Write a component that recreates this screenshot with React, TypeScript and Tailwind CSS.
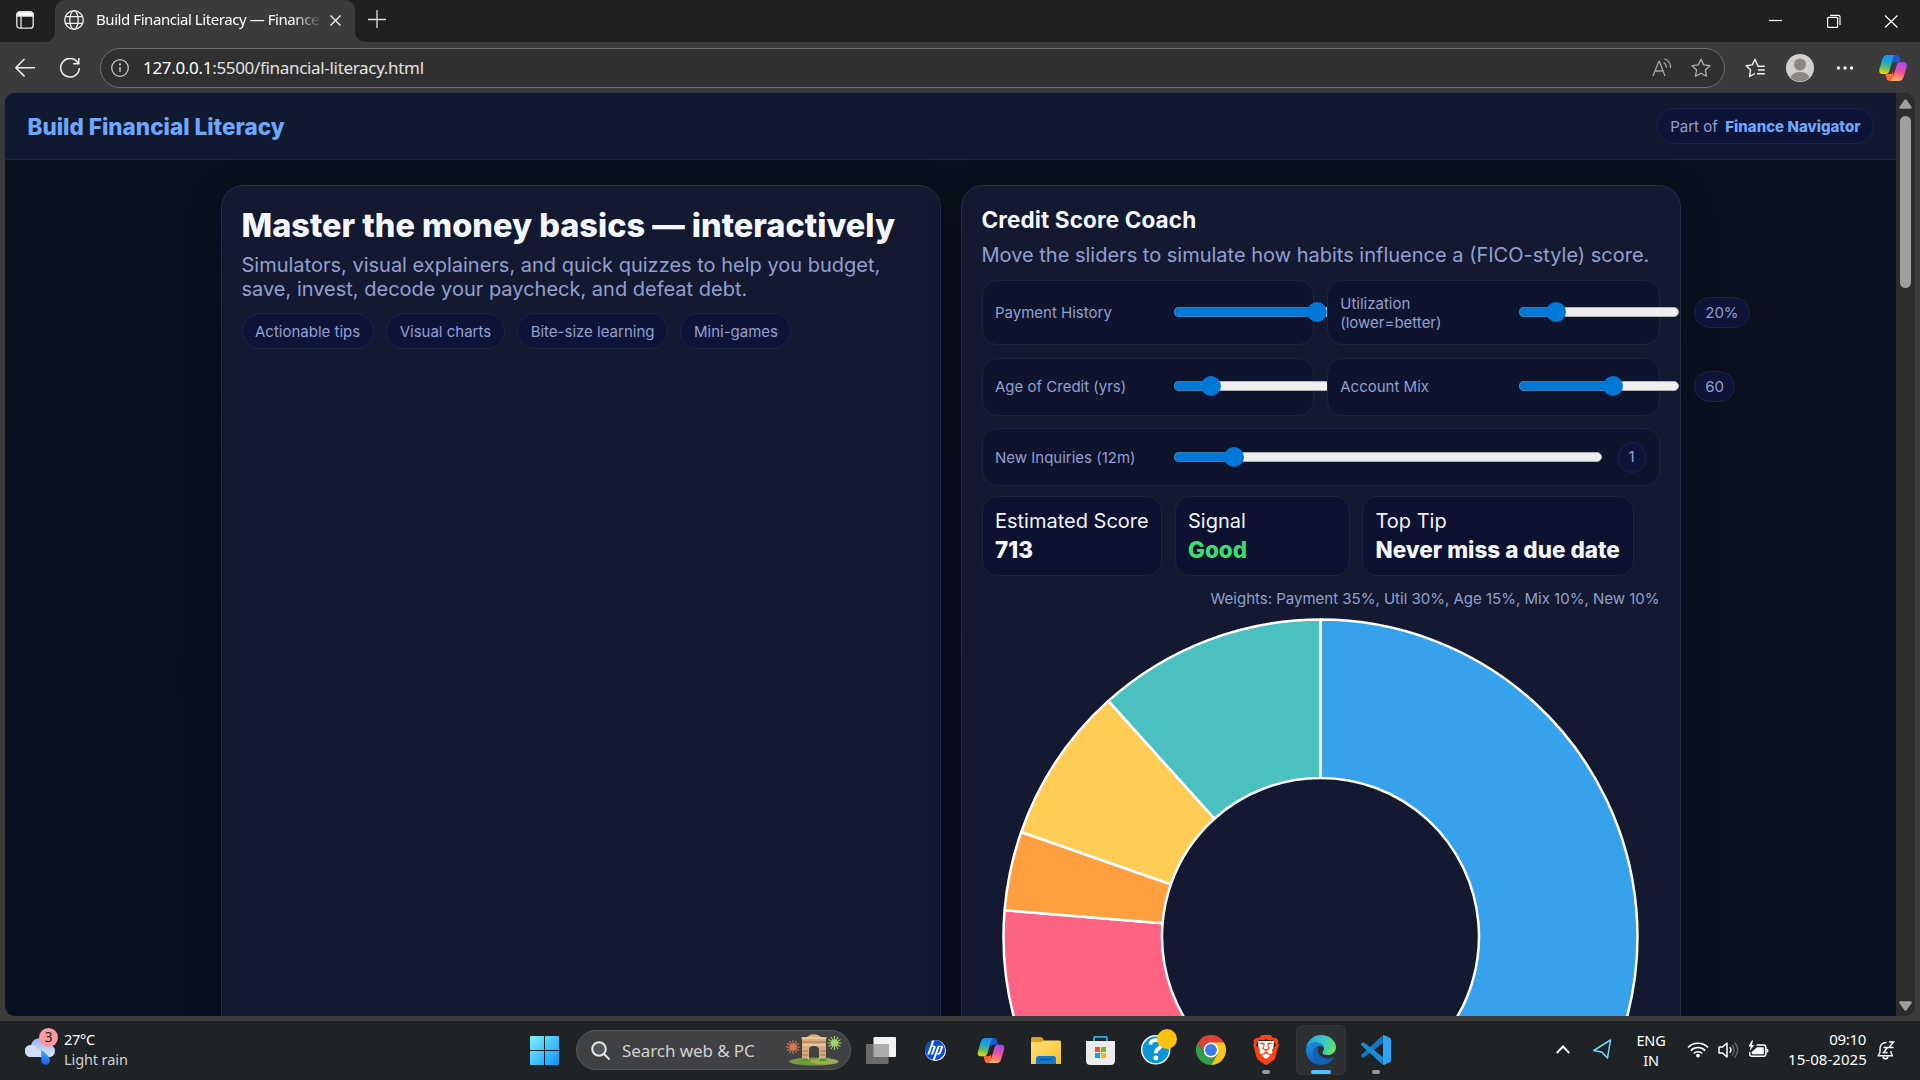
import React from "react";
import { SiBrave, SiHp } from "react-icons/si";

const UI = "font-['Noto_Sans',sans-serif]";

function Copilot({ id, className }: { id: string; className?: string }) {
  return (
    <svg className={className} viewBox="0 0 28 26" fill="none">
      <defs>
        <linearGradient id={id + "a"} x1="8" y1="0" x2="5" y2="19" gradientUnits="userSpaceOnUse">
          <stop stopColor="#1d8ff0" />
          <stop offset="0.35" stopColor="#1aa5d8" />
          <stop offset="0.65" stopColor="#5dbb6a" />
          <stop offset="1" stopColor="#f6d400" />
        </linearGradient>
        <linearGradient id={id + "b"} x1="22" y1="7" x2="17" y2="26" gradientUnits="userSpaceOnUse">
          <stop stopColor="#a24df0" />
          <stop offset="0.5" stopColor="#ef4f9a" />
          <stop offset="1" stopColor="#ffb35c" />
        </linearGradient>
      </defs>
      <path d="M13 0h4.500c1.500 0 2.300 1 2.700 2.300L21.500 7H17c-1.800 0-2.600 1-3.100 2.600z" fill="#1f56d8" />
      <path d="M15 26h-4.500c-1.600 0-2.500-1-2.900-2.400L6.200 19H11c1.800 0 2.500-1 3-2.600z" fill="#ff6a3c" />
      <path d="M8.500 0H17c-1.500 0-2.300 1.300-2.800 2.800L10.500 15.500C9.700 18 8.800 19 6.500 19H3.500C.6 19-.3 16.800.4 14L3.600 3.500C4.300 1.200 5.800 0 8.500 0z" fill={`url(#${id}a)`} />
      <path d="M19.500 26H11c1.500 0 2.300-1.300 2.800-2.800l3.700-12.700C18.300 8 19.200 7 21.500 7h3c2.900 0 3.800 2.200 3.100 5l-3.200 10.500C23.700 24.800 22.200 26 19.500 26z" fill={`url(#${id}b)`} />
    </svg>
  );
}

function TabStrip() {
  return (
    <div className="flex h-[42px] shrink-0 bg-[#3b3b3b]">
      <div className="flex h-full w-[55px] items-center rounded-br-[10px] bg-[#202020] pl-4">
        <svg className="mb-[2px] size-[18px]" viewBox="0 0 18 18" fill="none" stroke="#e8e8e8" strokeWidth="1.3">
          <rect x="0.8" y="0.8" width="16.400" height="16.400" rx="3" />
          <path d="M1 3.500A2.500 2.500 0 0 1 3.500 1h11A2.500 2.500 0 0 1 17 3.500V5H1z" fill="#fff" />
          <path d="M5 5v12" />
        </svg>
      </div>
      <div className="h-full w-[300px] bg-[#202020]">
        <div className="flex h-full items-start rounded-t-[10px] bg-[#3b3b3b] pl-[9px]">
          <svg className="mt-[10px] size-5 shrink-0" viewBox="0 0 20 20" fill="none" stroke="#f0f0f0" strokeWidth="1.3">
            <circle cx="10" cy="10" r="9.300" />
            <ellipse cx="10" cy="10" rx="4.200" ry="9.300" />
            <path d="M1.500 6.700h17M1.500 13.300h17" />
          </svg>
          <div className={`${UI} ml-3 mt-[7px] w-[224px] overflow-hidden whitespace-nowrap text-[15px] leading-6 tracking-[-0.43px] text-white [mask-image:linear-gradient(90deg,#000_198px,transparent_226px)]`}>
            Build Financial Literacy — Finance
          </div>
          <svg className="ml-[10px] mt-[15px] size-[11px] shrink-0" viewBox="0 0 11 11" stroke="#f2f2f2" strokeWidth="1.4">
            <path d="M.5.5l10 10M10.500.5l-10 10" />
          </svg>
        </div>
      </div>
      <div className="flex h-full flex-1 items-start rounded-bl-[10px] bg-[#202020]">
        <svg className="ml-[13px] mt-[10px] size-[18px]" viewBox="0 0 18 18" stroke="#e0e0e0" strokeWidth="1.3">
          <path d="M9 0v18M0 9.500h18" />
        </svg>
        <div className="flex-1" />
        <svg className="mr-[21px] mt-[14px] h-[14px] w-[131px]" viewBox="0 0 131 14" fill="none" stroke="#fff" strokeWidth="1.200">
          <path d="M1 6.500h13" />
          <rect x="59.600" y="3.400" width="10" height="10" rx="1" />
          <path d="M62 1.300h8.500a1.500 1.500 0 0 1 1.500 1.500V11" />
          <path d="M117 1.500l12.500 12M129.500 1.500l-12.500 12" />
        </svg>
      </div>
    </div>
  );
}

const STAR = "M10 1.200l2.700 5.700 6.200.8-4.500 4.300 1.100 6.200L10 15.200l-5.500 3 1.100-6.200L1.100 7.700l6.200-.8z";

function Toolbar() {
  return (
    <div className="flex h-[51px] shrink-0 items-start bg-[#3b3b3b] pt-[6px]">
      <svg className="ml-[15px] mt-[10px] size-5" viewBox="0 0 20 20" fill="none" stroke="#f0f0f0" strokeWidth="1.5">
        <path d="M20 9.700H1M9.500 1L.8 9.700l8.700 8.700" />
      </svg>
      <svg className="ml-[25px] mt-[10px] size-5" viewBox="0 0 20 20" fill="none" stroke="#f0f0f0" strokeWidth="1.5">
        <path d="M18.300 5.500A9.300 9.300 0 1 0 19.300 10M18.800 0v5.700h-5.700" />
      </svg>
      <div className="ml-5 flex h-10 w-[1625px] items-center rounded-full border border-[#6e6e6e] bg-[#303030] pl-[10px]">
        <svg className="size-[18px]" viewBox="0 0 18 18" fill="none" stroke="#c8c8c8" strokeWidth="1.3">
          <circle cx="9" cy="9" r="8.300" />
          <path d="M9 8v5" />
          <circle cx="9" cy="5.400" r=".5" fill="#c8c8c8" />
        </svg>
        <div className={`${UI} ml-[14px] flex-1 text-[17px] leading-6 tracking-[-0.32px] text-[#e2e2e2]`}>
          <span className="text-white">127.0.0.1</span>:5500/financial-literacy.html
        </div>
        <svg className="size-5" viewBox="0 0 20 20" fill="none" stroke="#a5a5a5" strokeWidth="1.300">
          <path d="M1 18L6.800 3.500h.6L13 18M3 13h8" />
          <path d="M11.500 4.500a6 6 0 0 1 3 5M12.500.8a9 9 0 0 1 6 9.200" />
        </svg>
        <svg className="ml-[19px] mr-[13px] size-5" viewBox="0 0 20 20" fill="none" stroke="#b0b0b0" strokeWidth="1.300" strokeLinejoin="round">
          <path d={STAR} />
        </svg>
      </div>
      <svg className="ml-5 mt-[10px] size-5" viewBox="0 0 20 20" fill="none" stroke="#f2f2f2" strokeWidth="1.400" strokeLinejoin="round">
        <path d="M19.800 8.200H13L10 1.200 7.300 6.900l-6.200.8L5.600 12l-1.100 6.500 5.500-3M13 12h6.800M12 15.800h7.800" />
      </svg>
      <svg className="ml-[21px] mt-[6px] size-7" viewBox="0 0 28 28">
        <circle cx="14" cy="14" r="14" fill="#d2d0ce" />
        <circle cx="14" cy="10.500" r="6" fill="#8a8684" />
        <path d="M4.500 23.500C6 19.500 10 18 14 18s8 1.500 9.500 5.500A14 14 0 0 1 4.500 23.500z" fill="#8a8684" />
      </svg>
      <svg className="ml-[22px] mt-[18px] h-1 w-[18px]" viewBox="0 0 18 4" fill="#f2f2f2">
        <circle cx="2.500" cy="2" r="1.700" />
        <circle cx="9" cy="2" r="1.700" />
        <circle cx="15.500" cy="2" r="1.700" />
      </svg>
      <Copilot id="tb" className="ml-[25px] mt-[7px] h-[26px] w-7" />
    </div>
  );
}

function Pill({ children, small }: { children: React.ReactNode; small?: boolean }) {
  return (
    <span
      className={
        "flex shrink-0 items-center whitespace-nowrap rounded-full border border-[#1c2547] bg-[#0c1437] text-[15px] text-[#93a0cf] " +
        (small ? "h-[31px] px-[10px] pt-px" : "h-9 px-[12.5px] pt-[2px]")
      }
    >
      {children}
    </span>
  );
}

function Slider({ pos, grow }: { pos: number; grow?: boolean }) {
  return (
    <div
      className={
        "relative -top-px h-[10px] shrink-0 rounded-full border border-[#b2b2b2] bg-[#efefef] " +
        (grow ? "top-0 w-[428px]" : "w-[159.5px]")
      }
    >
      <div className="-ml-px -mt-px h-[10px] rounded-l-full border border-r-0 border-[#2f7fb9] bg-[#0078d7]" style={{ width: pos }} />
      <div className="absolute -top-[6px] size-5 -translate-x-1/2 rounded-full bg-[#0078d7]" style={{ left: pos - 1 }} />
    </div>
  );
}

function Control({ label, pos, value, wide, tall }: { label: React.ReactNode; pos: number; value?: string; wide?: boolean; tall?: boolean }) {
  return (
    <div
      className={
        "relative flex min-w-0 items-center rounded-[15px] border border-[#1d2442] bg-[#0e132e] pl-[12.5px] " +
        (wide ? "col-span-2 h-[58px]" : tall ? "h-[65px]" : "h-[58px]")
      }
    >
      <div className="w-[163px] shrink-0 text-[15px] leading-[19px] text-[#93a0cf]">{label}</div>
      <div className="ml-4 flex shrink-0 items-center gap-[15.5px]">
        <Slider pos={pos} grow={wide} />
        {value && <Pill small>{value}</Pill>}
      </div>
    </div>
  );
}

function Stat({ label, value, className }: { label: string; value: string; className: string }) {
  return (
    <div className={"h-20 whitespace-nowrap rounded-[15px] border border-[#1d2442] bg-[#0c1230] pl-[12.5px] pt-3 " + className}>
      <div className="text-[20px] leading-6 text-[#f1f4ff]">{label}</div>
      <div className={"mt-[3px] text-[22.5px] font-extrabold leading-[27px] " + (value === "Good" ? "text-[#3ddc6f]" : "text-[#f5f7ff]")}>{value}</div>
    </div>
  );
}

const SLICES = [
  { from: 0, to: 170, color: "#36a2eb" },
  { from: 170, to: 274.75, color: "#ff6384" },
  { from: 274.75, to: 289.25, color: "#ff9f40" },
  { from: 289.25, to: 318, color: "#ffcd56" },
  { from: 318, to: 360, color: "#4bc0c0" },
];

function slicePath(from: number, to: number) {
  const R = 317;
  const r = 158.5;
  const p = (rad: number, deg: number) => {
    const t = (deg * Math.PI) / 180;
    return `${(318.5 + rad * Math.sin(t)).toFixed(2)} ${(318.5 - rad * Math.cos(t)).toFixed(2)}`;
  };
  return `M${p(R, from)}A${R} ${R} 0 0 1 ${p(R, to)}L${p(r, to)}A${r} ${r} 0 0 0 ${p(r, from)}Z`;
}

function Page() {
  return (
    <div className="flex min-h-0 flex-1 bg-[#3b3b3b] pb-1 pl-[5px] pr-[5px]">
      <div className="flex min-w-0 flex-1 overflow-hidden rounded-[10px] bg-[#2c2c2c] font-['Inter',sans-serif]">
        <div className="flex min-w-0 flex-1 flex-col bg-[linear-gradient(180deg,#0a101d,#0a0f22)]">
          <header className="flex h-[67px] shrink-0 items-center justify-between border-b border-[#1d2742] bg-[#111930] pl-[22.5px] pr-[22px]">
            <div className="pt-[2px] text-[22.5px] font-extrabold leading-7 text-[#6ea8fe]">Build Financial Literacy</div>
            <Pill>
              Part of <b className="ml-[7.5px] font-extrabold text-[#6ea8fe]">Finance Navigator</b>
            </Pill>
          </header>
          <main className="flex min-h-0 flex-1 gap-5 pl-[215.5px] pt-[25px]">
            <section className="h-[1100px] w-[720px] shrink-0 rounded-[22px] border border-[#262e49] bg-[#121931] px-5 pt-5 shadow-[0_10px_38px_rgba(0,0,0,0.25)]">
              <h1 className="whitespace-nowrap text-[32.5px] font-extrabold leading-[39px] text-[#f5f7ff]">Master the money basics — interactively</h1>
              <p className="mt-2 text-[20px] leading-6 text-[#93a0cf]">
                Simulators, visual explainers, and quick quizzes to help you budget,
                <br />
                save, invest, decode your paycheck, and defeat debt.
              </p>
              <div className="mt-3 flex gap-[12.5px]">
                <Pill>Actionable tips</Pill>
                <Pill>Visual charts</Pill>
                <Pill>Bite-size learning</Pill>
                <Pill>Mini-games</Pill>
              </div>
            </section>
            <section className="h-[1100px] w-[720px] shrink-0 rounded-[22px] border border-[#262e49] bg-[#121931] px-5 pt-5 shadow-[0_10px_38px_rgba(0,0,0,0.25)]">
              <h3 className="text-[22.5px] font-bold leading-[27px] tracking-[0.12px] text-[#f5f7ff]">Credit Score Coach</h3>
              <p className="mt-[10px] whitespace-nowrap text-[20px] leading-6 text-[#93a0cf]">Move the sliders to simulate how habits influence a (FICO-style) score.</p>
              <div className="mt-[13px] grid grid-cols-2 gap-[12.5px]">
                <Control label="Payment History" pos={143} tall />
                <Control label={<>Utilization<br />(lower=better)</>} pos={37} value="20%" tall />
                <Control label="Age of Credit (yrs)" pos={37} />
                <Control label="Account Mix" pos={94} value="60" />
                <Control label="New Inquiries (12m)" pos={60} value="1" wide />
              </div>
              <div className="mt-[10px] flex gap-[12.5px]">
                <Stat label="Estimated Score" value="713" className="w-[180.5px]" />
                <Stat label="Signal" value="Good" className="w-[175px]" />
                <Stat label="Top Tip" value="Never miss a due date" className="w-[271.5px]" />
              </div>
              <div className="mt-[13px] text-right text-[15px] leading-5 text-[#93a0cf]">Weights: Payment 35%, Util 30%, Age 15%, Mix 10%, New 10%</div>
              <svg className="ml-[20px] mt-[9px] size-[637px]" viewBox="0 0 637 637" stroke="#fff" strokeWidth="2.500" strokeLinejoin="bevel">
                {SLICES.map((s) => (
                  <path key={s.color} d={slicePath(s.from, s.to)} fill={s.color} />
                ))}
              </svg>
            </section>
          </main>
        </div>
        <div className="flex w-[19px] shrink-0 flex-col items-center justify-between bg-[#2c2c2c] py-[6px]">
          <div className="flex flex-col items-center gap-[7px]">
            <svg className="h-[10px] w-[13px]" viewBox="0 0 13 10" fill="#9f9f9f"><path d="M5.500.8q1-1.100 2 0l5 7q.6 2-1 2h-10q-1.600 0-1-2z" /></svg>
            <div className="h-[172px] w-[11px] rounded-full bg-[#9f9f9f]" />
          </div>
          <svg className="mb-[-1px] h-[10px] w-[13px]" viewBox="0 0 13 10" fill="#9f9f9f"><path d="M5.500 9.200q1 1.100 2 0l5-7q.6-2-1-2h-10q-1.600 0-1 2z" /></svg>
        </div>
      </div>
    </div>
  );
}

function Slot({ children, active, running }: { children: React.ReactNode; active?: boolean; running?: boolean }) {
  return (
    <div className={"relative flex size-[50px] items-center justify-center rounded-md border " + (active ? "border-[#33373a] bg-[#2d3033]" : "border-transparent")}>
      {children}
      {active && <div className="absolute bottom-0 h-1 w-5 rounded-full bg-[#4cc2ff]" />}
      {running && <div className="absolute bottom-0 h-1 w-2 rounded-full bg-[#9a9a9a]" />}
    </div>
  );
}

function Burst({ color, x, y }: { color: string; x: number; y: number }) {
  return (
    <g stroke={color} strokeWidth="1.100">
      {[0, 30, 60, 90, 120, 150].map((a) => (
        <path key={a} d={`M${x - 7} ${y}h14`} transform={`rotate(${a} ${x} ${y})`} />
      ))}
      <circle cx={x} cy={y} r="3.500" fill={color} stroke="none" />
    </g>
  );
}

function SearchBox() {
  return (
    <div className="flex h-10 w-[275px] items-center rounded-full border border-[#56585a] bg-[#3f4143] pl-[14px]">
      <svg className="size-[19px]" viewBox="0 0 19 19" fill="none" stroke="#e8e8e8" strokeWidth="2" strokeLinecap="round">
        <circle cx="8" cy="8" r="6.800" fill="#55585a" />
        <path d="M13 13l5 5" />
      </svg>
      <div className={`${UI} ml-[12px] w-[164px] whitespace-nowrap pt-px text-[17px] leading-6 tracking-[-0.08px] text-[#d2d2d2]`}>Search web &amp; PC</div>
      <svg className="h-8 w-14" viewBox="0 0 56 32">
        <ellipse cx="28" cy="27.500" rx="25" ry="4" fill="#6f9a3f" />
        <ellipse cx="38" cy="27.500" rx="14" ry="3" fill="#a3a84d" />
        <path d="M16 26V4q6-1 7-2.500Q28-1 33 1.500 34 3 40 4v22h-7V16q0-4-5-4t-5 4v10z" fill="#d9ab80" />
        <path d="M15.500 4h25M16 11h24" stroke="#f0cfa8" strokeWidth="1.500" />
        <path d="M16 8h24M16 17h6M16 21h6M34 17h6M34 21h6" stroke="#a87550" strokeWidth="1" />
        <path d="M15 27q1-4 3.500-2 3-2 4.500 2zM33 27q1-4 3.500-2 3-2 4.500 2z" fill="#3f9a3a" />
        <Burst color="#d3784f" x={7} y={13} />
        <Burst color="#a5cf6f" x={48.5} y={9} />
      </svg>
    </div>
  );
}

function Taskbar() {
  return (
    <div className={`${UI} grid h-[60px] shrink-0 grid-cols-[530px_1fr_400px] border-t border-[#414141] bg-[#202326] text-white`}>
      <div className="flex pl-[22px] pt-[6px]">
        <svg className="h-[40px] w-[36px]" viewBox="0 0 36 40">
          <defs>
            <linearGradient id="cl" x1="0" y1="0" x2="0" y2="1"><stop stopColor="#8fb5f2" /><stop offset="1" stopColor="#dbe8fc" /></linearGradient>
            <linearGradient id="dr" x1="0" y1="0" x2="0" y2="1"><stop stopColor="#5bb2ff" /><stop offset="1" stopColor="#0a62f0" /></linearGradient>
          </defs>
          <path d="M9 30q-6-.5-6-6t6-6q2-7 9.500-7T28 18q5 1 5 6t-5 6z" fill="url(#cl)" />
          <path d="M9 30q-6-.5-6-6t6-6q5 0 6.500 4.500Q24 22 26 30z" fill="#cfdff9" />
          <path d="M19 22.500q9 6.500 9 11a4.300 4.300 0 0 1-8.600 0z" fill="url(#dr)" />
          <circle cx="26.500" cy="10.500" r="9.500" fill="#ff99a4" />
          <text x="26.500" y="15.300" fontSize="13.500" textAnchor="middle" fill="#1b1b1b">3</text>
        </svg>
        <div className="ml-[6px] mt-[2px] text-[14.5px] leading-5 tracking-[-0.3px]">
          <div>27°C</div>
          <div className="tracking-[-0.1px] text-[#cfcfcf]">Light rain</div>
        </div>
      </div>
      <div className="flex items-center pb-px">
        <svg className="size-[29px]" viewBox="0 0 29 29">
          <defs><linearGradient id="wn" x1="0" y1="0" x2="1" y2="1" gradientUnits="objectBoundingBox"><stop stopColor="#7df1ff" /><stop offset="0.5" stopColor="#46c4fb" /><stop offset="1" stopColor="#0c92f5" /></linearGradient></defs>
          <path d="M0 1q0-1 1-1h13v14H0zM15 0h13q1 0 1 1v13H15zM0 15h14v14H1q-1 0-1-1zM15 15h14v13q0 1-1 1H15z" fill="url(#wn)" />
        </svg>
        <div className="ml-[17px]"><SearchBox /></div>
        <div className="ml-[5px] flex gap-[5px]">
          <Slot>
            <svg className="h-[27px] w-[30px]" viewBox="0 0 30 27">
              <rect x="7.500" width="22.500" height="20" rx="1" fill="#f2f2f2" />
              <rect y="7" width="22.500" height="20" rx="1" fill="#6b6b6b" />
              <rect x="7.500" y="7" width="15" height="13" fill="#adadad" />
            </svg>
          </Slot>
          <Slot>
            <div className="flex size-[21px] -translate-x-px items-center justify-center rounded-full bg-white"><SiHp className="size-[20px] text-[#0a4bd8]" /></div>
          </Slot>
          <Slot><Copilot id="tk" className="h-[25px] w-7" /></Slot>
          <Slot>
            <svg className="h-[27px] w-[30px]" viewBox="0 0 30 27">
              <defs><linearGradient id="fo" x1="0" y1="0" x2="1" y2="1"><stop stopColor="#ffdf7a" /><stop offset="1" stopColor="#fbc02d" /></linearGradient></defs>
              <path d="M0 1.500Q0 0 1.500 0h8q1 0 2 1l1.500 2.500V8H0z" fill="#dfa00d" />
              <path d="M0 5h9.500q1 0 2-.7t2-.8H28.500q1.500 0 1.500 1.500V27H0z" fill="url(#fo)" />
              <path d="M5 27v-5.500Q5 19 7.500 19h15Q25 19 25 21.500V27z" fill="#1379cc" />
              <path d="M9 22.500h12" stroke="#0b4f91" strokeWidth="1.300" />
            </svg>
          </Slot>
          <Slot>
            <svg className="h-[29px] w-[29px] -translate-x-px" viewBox="0 0 29 29">
              <path d="M8 6V2q0-1.200 1.200-1.200h10.600Q21 .8 21 2v4" fill="none" stroke="#25b3ee" strokeWidth="1.800" />
              <path d="M0 5h29v19.500q0 4.500-4.500 4.500h-20Q0 29 0 24.500z" fill="#ececec" />
              <path d="M9 11h5v5H9z" fill="#f25022" /><path d="M15 11h5v5h-5z" fill="#7fba00" />
              <path d="M9 17h5v5H9z" fill="#00a4ef" /><path d="M15 17h5v5h-5z" fill="#ffb900" />
            </svg>
          </Slot>
          <Slot>
            <svg className="h-[36px] w-[36px] shrink-0 -translate-y-[3px] translate-x-[3px]" viewBox="0 0 36 36">
              <circle cx="14.700" cy="20.800" r="14" fill="#0b96d6" stroke="#f5f5f5" strokeWidth="1.500" />
              <path d="M9.300 15.500q.7-4.500 5.400-4.500 5.300.2 5.300 4.500 0 2.600-3 4.500-2.200 1.500-2.200 4.200" fill="none" stroke="#fff" strokeWidth="3.600" />
              <circle cx="14.800" cy="29" r="2.400" fill="#fff" />
              <circle cx="26" cy="10" r="10" fill="#fdc10f" />
            </svg>
          </Slot>
          <Slot>
            <svg className="size-[30px]" viewBox="0 0 30 30">
              <path d="M15 15L2 7.500A15 15 0 0 1 28 7.500z" fill="#dd4236" />
              <path d="M15 7.500h13A15 15 0 0 1 15 30L21.500 18.700z" fill="#fcc419" />
              <path d="M2 7.500A15 15 0 0 0 15 30l6.500-11.200-13 0z" fill="#2f9e4b" />
              <path d="M2 7.500h13v7.500H6.300z" fill="#dd4236" />
              <path d="M6.300 15L2 7.500l6.500 11.300z" fill="#2f9e4b" />
              <circle cx="15" cy="15" r="7.500" fill="#fff" />
              <circle cx="15" cy="15" r="5.900" fill="#3b7ded" />
            </svg>
          </Slot>
          <Slot running>
            <svg className="absolute h-[22px] w-[18px]" viewBox="0 0 18 22"><path d="M1 2h16l-1 13-7 6-7-6z" fill="#fff" /></svg>
            <SiBrave className="relative size-[30px] text-[#fb4014]" />
          </Slot>
          <Slot active>
            <svg className="size-[30px]" viewBox="0 0 30 30">
              <defs>
                <linearGradient id="e1" x1="3" y1="6" x2="29" y2="14" gradientUnits="userSpaceOnUse"><stop stopColor="#2aa7e8" /><stop offset="0.5" stopColor="#35c7cf" /><stop offset="1" stopColor="#69e05c" /></linearGradient>
                <linearGradient id="e2" x1="2" y1="10" x2="12" y2="30" gradientUnits="userSpaceOnUse"><stop stopColor="#1a8be0" /><stop offset="1" stopColor="#0a5cb8" /></linearGradient>
              </defs>
              <path d="M.2 13.500C1 6 7 0 15 0s15 5.500 15 12.300c0 4.500-3.500 7.800-8.300 7.800-3.700 0-5.300-1.500-5.300-2.300 0-.7 1.600-1.500 1.600-4.200C18 10.500 14.500 7.500 9.500 7.500 5 7.500 1.500 10 .2 13.500z" fill="url(#e1)" />
              <path d="M0 15C.3 10.500 4.500 7.500 9.500 7.500c5 0 8.500 3 8.500 6-.3-1.500-2-2.500-4-2.500-3.500 0-6.500 3.500-6.500 8 0 5.500 4.500 10.500 10 10.800Q16 30 15 30C6.500 30 0 23.500 0 15z" fill="url(#e2)" />
              <path d="M12.300 11.400C9.500 12.800 7.500 15.500 7.500 19c0 6 4.500 10.800 10 10.800 4.500-.7 8-3.300 10.300-6.800.3-.6-.2-.9-.7-.7-1.500.8-3.300 1.200-5.100 1.200-6 0-10.500-3.800-10.500-8.500 0-1.300.3-2.500.8-3.600z" fill="#1460b5" />
            </svg>
          </Slot>
          <Slot running>
            <svg className="size-[30px]" viewBox="0 0 30 30">
              <path d="M22 8L3 22.500Q2 23 1.300 22.300L.3 21.300Q-.4 20.500.4 19.700L21.500.5z" fill="#1476bd" />
              <path d="M22 22L3 7.500Q2 7 1.300 7.700L.3 8.700Q-.4 9.500.4 10.300L21.500 29.500z" fill="#1b8bd8" />
              <path d="M21.500.5q1-.8 2-.3l5.300 2.500Q30 3.300 30 4.600v20.800q0 1.300-1.200 1.900l-5.300 2.500q-1 .5-2-.3.500.1.500-1V1.500q0-1.100-.5-1z" fill="#2ba4f4" />
            </svg>
          </Slot>
        </div>
      </div>
      <div className="flex items-start">
        <svg className="ml-[36px] mt-[24px] h-[9px] w-[14px] shrink-0" viewBox="0 0 14 9" fill="none" stroke="#fff" strokeWidth="1.900"><path d="M.8 8L7 1.500 13.200 8" /></svg>
        <svg className="ml-[23px] mt-[18px] size-5 shrink-0" viewBox="0 0 20 20" fill="none" stroke="#74dcf5" strokeWidth="1.500" strokeLinejoin="round"><path d="M17.500 1L.8 11.500l7.700 1.400L14.500 19z" /></svg>
        <div className="ml-[20px] mt-[9px] w-[36px] shrink-0 text-center text-[14.5px] leading-5 tracking-[-0.2px]">
          <div>ENG</div>
          <div>IN</div>
        </div>
        <svg className="ml-[18px] mt-[20px] h-[17px] w-[22px] shrink-0" viewBox="0 0 22 17" fill="none" stroke="#fff" strokeWidth="1.600">
          <path d="M1 6.500a14 14 0 0 1 20 0M3.800 9.600a10 10 0 0 1 14.400 0M6.800 12.500a6 6 0 0 1 8.400 0" />
          <circle cx="11" cy="14.600" r="1.900" fill="#fff" stroke="none" />
        </svg>
        <svg className="ml-[9px] mt-[20px] h-[18px] w-[21px] shrink-0" viewBox="0 0 21 18" fill="none" stroke="#fff" strokeWidth="1.500">
          <path d="M1 6h3.500L9 2v14l-4.500-4H1z" strokeLinejoin="round" />
          <path d="M11.700 6.300a4 4 0 0 1 0 5.400" />
          <path d="M14 3.800a7.500 7.500 0 0 1 0 10.400M16.500 1.500a10.500 10.500 0 0 1 0 15" stroke="#606366" />
        </svg>
        <svg className="ml-[9px] mt-[19px] h-[18px] w-[21px] shrink-0" viewBox="0 0 21 18">
          <path d="M8.500 5h7q2.300 0 2.300 2.300V14q0 2.300-2.300 2.300H4Q1.700 16.300 1.700 14v-2" fill="none" stroke="#fff" strokeWidth="1.500" />
          <path d="M9 7.200h6q.8 0 .8.800v5.500q0 .8-.8.800H4.500q-.8 0-.8-.8V12z" fill="#fff" />
          <path d="M18.500 8.500q2 .2 2 2.200t-2 2.200zM3.500 1L.5 6.500h2.200L1.700 11l4.500-6H4L5 0z" fill="#fff" />
        </svg>
        <div className="ml-[19px] mr-px mt-[8px] w-[78px] shrink-0 whitespace-nowrap text-right text-[15px] leading-5">
          <div className="tracking-[-0.3px]">09:10</div>
          <div className="tracking-[0.05px]">15-08-2025</div>
        </div>
        <svg className="ml-[11px] mt-[20px] h-[19px] w-[18px] shrink-0 -translate-x-px" viewBox="0 0 18 19" fill="none" stroke="#fff" strokeWidth="1.400">
          <path d="M9.500 1.500Q3 1.500 3 8v3.500L1 14.800h14.500L14 11.500V10" strokeLinejoin="round" />
          <path d="M6 15.500q.5 2.300 2.500 2.300t2.500-2.300" />
          <path d="M6.500 6.500h4l-4 5h4M12 1h4.500L12 6.500h4.500" />
        </svg>
      </div>
    </div>
  );
}

export default function App() {
  return (
    <div className="flex h-[1080px] w-[1920px] flex-col overflow-hidden bg-[#202020]">
      <TabStrip />
      <Toolbar />
      <Page />
      <Taskbar />
    </div>
  );
}
